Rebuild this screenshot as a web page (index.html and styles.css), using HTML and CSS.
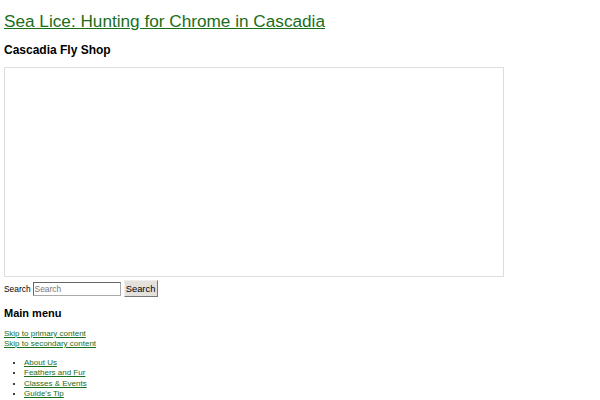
FILE: index.html
```html
<!DOCTYPE html>
<html lang="en">
<head>
    <meta charset="UTF-8">
    <title>Sea Lice: Hunting for Chrome in Cascadia</title>
    <link rel="stylesheet" href="styles.css">
</head>
<body>

    <div class="header">
        <h1 class="site-title"><a href="#">Sea Lice: Hunting for Chrome in Cascadia</a></h1>
        <h2 class="site-description">Cascadia Fly Shop</h2>

        <!-- header image -->
        <div class="header-image"></div>

        <form class="search-form">
            <label for="s">Search</label>
            <input type="text" id="s" placeholder="Search">
            <button type="button" class="search-btn">Search</button>
        </form>
    </div>

    <div class="access">
        <h3 class="menu-title">Main menu</h3>
        <div class="skip-links">
            <a href="#">Skip to primary content</a><br>
            <a href="#">Skip to secondary content</a>
        </div>
        <ul class="menu">
            <li><a href="#">About Us</a></li>
            <li><a href="#">Feathers and Fur</a></li>
            <li><a href="#">Classes &amp; Events</a></li>
            <li><a href="#">Guide's Tip</a></li>
        </ul>
    </div>

</body>
</html>
```

FILE: styles.css
```css
body {
    font-family: "Liberation Sans", Arial, sans-serif;
    font-size: 8px;
    color: #000;
    background-color: #fff;
    margin: 0;
    padding: 4px;
}

a {
    color: #1b6e1b;
}

.site-title {
    font-size: 17.2px;
    font-weight: normal;
    margin: 6px 0 0 0;
    line-height: 22px;
}

.site-description {
    font-size: 12px;
    margin: 10px 0 0 0;
    line-height: 16px;
}

.header-image {
    width: 498px;
    height: 208px;
    border: 1px solid #ddd;
    margin-top: 9px;
}

.search-form {
    display: flex;
    align-items: center;
    margin-top: 3px;
    font-size: 8.4px;
}

.search-form label {
    margin-right: 2px;
}

.search-form input {
    width: 84px;
    height: 10px;
    padding: 1px 1px;
    font-family: "Liberation Sans", Arial, sans-serif;
    font-size: 8.4px;
    border: 1px solid #aaa;
    border-top-color: #666;
    border-left-color: #666;
    margin: 0 3px 0 0;
}

.search-btn {
    font-family: "Liberation Sans", Arial, sans-serif;
    font-size: 9.4px;
    height: 17px;
    width: 34px;
    padding: 0;
    background-color: #e4e1dc;
    border: 1px solid #777;
    border-top-color: #eee;
    border-left-color: #eee;
}

.menu-title {
    font-size: 11px;
    margin: 9px 0 0 0;
    line-height: 14px;
}

.skip-links {
    margin-top: 9px;
    line-height: 10px;
}

.menu {
    margin: 9px 0 0 0;
    padding-left: 20px;
    line-height: 10.4px;
}
```
